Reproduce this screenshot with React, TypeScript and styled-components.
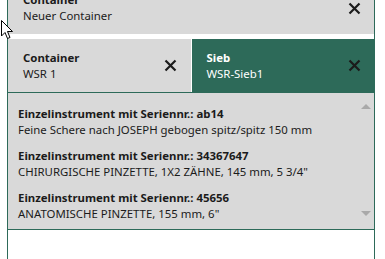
import React from "react";
import styled, { createGlobalStyle } from "styled-components";

const GREEN = "#2d6a59";
const GRAY = "#d9d9d9";

const Global = createGlobalStyle`
  html, body {
    margin: 0;
    padding: 0;
    background: #fff;
    overflow: hidden;
  }
  body {
    font-family: "Noto Sans", "Open Sans", Arial, sans-serif;
    font-size: 11.4px;
    color: #1b1b1b;
  }
`;

interface Item {
  serial: string;
  name: string;
}

const items: Item[] = [
  { serial: "ab14", name: "Feine Schere nach JOSEPH gebogen spitz/spitz 150 mm" },
  { serial: "34367647", name: "CHIRURGISCHE PINZETTE, 1X2 ZÄHNE, 145 mm, 5 3/4\"" },
  { serial: "45656", name: "ANATOMISCHE PINZETTE, 155 mm, 6\"" },
];

function CloseIcon({ color }: { color: string }) {
  return (
    <svg width="13" height="13" viewBox="0 0 13 13">
      <path d="M1.5 1.5 L11.5 11.5 M11.5 1.5 L1.5 11.5" stroke={color} strokeWidth="2.2" strokeLinecap="butt" />
    </svg>
  );
}

export default function App() {
  return (
    <>
      <Global />
      <Page>
        <Frame>
          <TopCard>
            <CardText>
              <Title>Container</Title>
              <Sub>Neuer Container</Sub>
            </CardText>
            <CloseBtn>
              <CloseIcon color="#1b1b1b" />
            </CloseBtn>
          </TopCard>
          <Tabs>
            <Tab active={false}>
              <CardText>
                <Title>Container</Title>
                <Sub>WSR 1</Sub>
              </CardText>
              <CloseBtn>
                <CloseIcon color="#1b1b1b" />
              </CloseBtn>
            </Tab>
            <Tab active>
              <CardText>
                <Title>Sieb</Title>
                <Sub>WSR-Sieb1</Sub>
              </CardText>
              <CloseBtn>
                <CloseIcon color="#1b1b1b" />
              </CloseBtn>
            </Tab>
          </Tabs>
          <ListBox>
            <List>
              {items.map((it) => (
                <Entry key={it.serial}>
                  <EntryTitle>Einzelinstrument mit Seriennr.: {it.serial}</EntryTitle>
                  <EntryName>{it.name}</EntryName>
                </Entry>
              ))}
            </List>
            <ScrollBar>
              <Arrow dir="up" />
              <Arrow dir="down" />
            </ScrollBar>
          </ListBox>
        </Frame>
        <Cursor width="13" height="20" viewBox="0 0 13 20">
          <path d="M0.5 0.5 L0.5 16 L4 12.5 L6.5 18.5 L9 17.5 L6.5 11.5 L11.5 11.5 Z" fill="#fff" stroke="#000" strokeWidth="1" strokeLinejoin="miter" />
        </Cursor>
      </Page>
    </>
  );
}

const Page = styled.div`
  position: relative;
  width: 385px;
  height: 259px;
  overflow: hidden;
`;

const Frame = styled.div`
  margin-left: 7px;
  width: 366px;
  height: 259px;
  border-left: 1px solid ${GREEN};
  border-right: 1px solid ${GREEN};
  display: flex;
  flex-direction: column;
`;

const TopCard = styled.div`
  margin-top: -18px;
  height: 52px;
  background: ${GRAY};
  display: flex;
  align-items: center;
  padding: 0 13px 0 15px;
  flex-shrink: 0;
`;

const Tabs = styled.div`
  margin-top: 5px;
  display: grid;
  grid-template-columns: 1fr 1fr;
  column-gap: 1px;
  height: 53px;
  border-bottom: 1px solid ${GREEN};
  flex-shrink: 0;
`;

const Tab = styled.div<{ active: boolean }>`
  background: ${(p) => (p.active ? GREEN : GRAY)};
  color: ${(p) => (p.active ? "#fff" : "#1b1b1b")};
  display: flex;
  align-items: center;
  padding: 0 ${(p) => (p.active ? "13px" : "14px")} 0 15px;
`;

const CardText = styled.div`
  flex: 1;
  display: flex;
  flex-direction: column;
  line-height: 16px;
`;

const Title = styled.div`
  font-weight: 700;
`;

const Sub = styled.div``;

const CloseBtn = styled.div`
  width: 13px;
  height: 13px;
  display: flex;
`;

const ListBox = styled.div`
  height: 136px;
  background: ${GRAY};
  border-bottom: 1px solid ${GREEN};
  display: flex;
  flex-shrink: 0;
`;

const List = styled.div`
  flex: 1;
  padding: 9px 0 0 10px;
`;

const Entry = styled.div`
  padding: 4px 0 6px;
  line-height: 16px;
`;

const EntryTitle = styled.div`
  font-weight: 700;
`;

const EntryName = styled.div``;

const ScrollBar = styled.div`
  width: 17px;
  display: flex;
  flex-direction: column;
  justify-content: space-between;
  align-items: center;
  padding: 11px 0 13px;
`;

const Arrow = styled.div<{ dir: "up" | "down" }>`
  width: 0;
  height: 0;
  border-left: 5px solid transparent;
  border-right: 5px solid transparent;
  ${(p) =>
    p.dir === "up"
      ? `border-bottom: 5px solid #a9a9a9;`
      : `border-top: 5px solid #a9a9a9;`}
`;

const Cursor = styled.svg`
  position: absolute;
  left: 1px;
  top: 20px;
`;
